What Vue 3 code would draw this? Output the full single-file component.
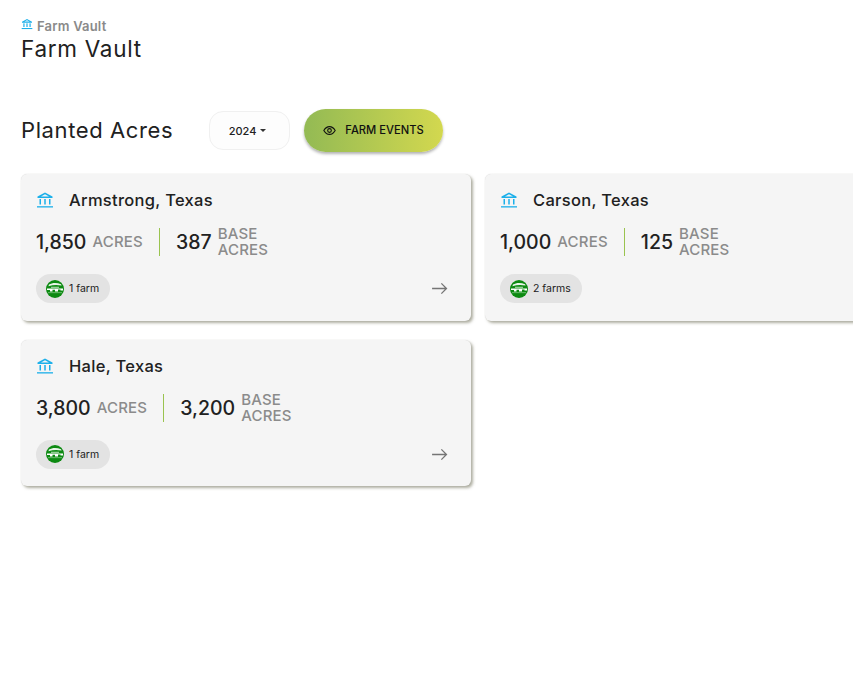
<script setup>
const counties = [
  { name: 'Armstrong, Texas', acres: '1,850', base: '387', farms: '1 farm' },
  { name: 'Carson, Texas', acres: '1,000', base: '125', farms: '2 farms' },
  { name: 'Hale, Texas', acres: '3,800', base: '3,200', farms: '1 farm' }
]
</script>

<template>
  <div class="page">
    <div class="crumb">
      <svg class="bank small" viewBox="0 0 18 18">
        <path d="M9 1.5 L16.5 5.5 V7 H1.5 V5.5 Z M9 3.2 L5 5.4 H13 Z" fill-rule="evenodd" />
        <rect x="3.5" y="8" width="1.8" height="5.5" />
        <rect x="8.1" y="8" width="1.8" height="5.5" />
        <rect x="12.7" y="8" width="1.8" height="5.5" />
        <rect x="1" y="15" width="16" height="1.6" />
      </svg>
      <span>Farm Vault</span>
    </div>
    <h1 class="title">Farm Vault</h1>

    <div class="toolbar">
      <h2 class="section">Planted Acres</h2>
      <button class="year">2024 <i class="caret"></i></button>
      <button class="events">
        <svg class="eye" viewBox="0 0 24 24" fill="none" stroke="#111" stroke-width="2">
          <path d="M1.5 12 C5 6 9 4.8 12 4.8 S19 6 22.5 12 C19 18 15 19.2 12 19.2 S5 18 1.5 12 Z" />
          <circle cx="12" cy="12" r="3.4" />
        </svg>
        FARM EVENTS
      </button>
    </div>

    <div class="grid">
      <div v-for="c in counties" :key="c.name" class="card">
        <div class="card-head">
          <svg class="bank" viewBox="0 0 18 18">
            <path d="M9 1.5 L16.5 5.5 V7 H1.5 V5.5 Z M9 3.2 L5 5.4 H13 Z" fill-rule="evenodd" />
            <rect x="3.5" y="8" width="1.5" height="5.5" />
            <rect x="8.25" y="8" width="1.5" height="5.5" />
            <rect x="13" y="8" width="1.5" height="5.5" />
            <rect x="1" y="15.2" width="16" height="1.3" />
          </svg>
          <span class="name">{{ c.name }}</span>
        </div>
        <div class="stats">
          <span class="num">{{ c.acres }}</span>
          <span class="unit">ACRES</span>
          <span class="divider"></span>
          <span class="num">{{ c.base }}</span>
          <span class="unit">BASE<br />ACRES</span>
        </div>
        <div class="card-foot">
          <span class="chip">
            <svg class="logo" viewBox="0 0 18 18">
              <circle cx="9" cy="9" r="9" fill="#0d8a12" />
              <path d="M3 4.6 C6 2.6 11 2.4 15 4.2 L15.6 5.6 C11 4.6 7 4.8 2.4 6.2 Z" fill="#e9f5e9" />
              <path d="M1 8.6 H17 V10.6 H14.5 V9.6 H12 V11.4 H9 V9.8 H6.5 V11.4 H4 V10 H1 Z" fill="#fff" />
              <path d="M5 6.8 H13 V7.7 H5 Z" fill="#cfe9cf" />
              <path d="M2 12.4 H16 V13.1 H2 Z" fill="#8fcf90" />
            </svg>
            {{ c.farms }}
          </span>
          <svg class="arrow" viewBox="0 0 18 14" fill="none" stroke="#757575" stroke-width="1.4">
            <path d="M1 7 H16.5 M11 1.5 L16.5 7 L11 12.5" />
          </svg>
        </div>
      </div>
    </div>
  </div>
</template>

<style scoped>
.page {
  height: 683px;
  overflow: hidden;
  padding: 17px 0 0 21px;
  box-sizing: border-box;
  font-family: Inter, "Liberation Sans", sans-serif;
  color: #212121;
  background: #fff;
}

.crumb {
  display: flex;
  align-items: center;
  gap: 4px;
  height: 17px;
  font-size: 13px;
  font-weight: 600;
  letter-spacing: 0.2px;
  color: #8a8a8a;
}

.bank {
  width: 18px;
  height: 18px;
  fill: #1cb0ea;
  flex: none;
}

.bank.small {
  width: 12px;
  height: 12px;
  margin-top: -3px;
}

.title {
  margin: 0;
  font-size: 22.5px;
  line-height: 30px;
  font-weight: 400;
  letter-spacing: 0.7px;
}

.toolbar {
  display: flex;
  align-items: center;
  margin-top: 44px;
  height: 44px;
}

.section {
  margin: 0;
  width: 188px;
  font-size: 22px;
  font-weight: 400;
  letter-spacing: 0.6px;
}

.year {
  width: 81px;
  height: 39px;
  margin-top: 1px;
  padding: 0 4px 0 0;
  border: 1px solid #f0f0f0;
  border-radius: 14px;
  background: #fdfdfd;
  font: 500 11px Inter, sans-serif;
  color: #212121;
  display: flex;
  align-items: center;
  justify-content: center;
  gap: 4px;
}

.caret {
  width: 0;
  height: 0;
  border: 3px solid transparent;
  border-top-color: #333;
  border-bottom: 0;
}

.events {
  width: 139px;
  height: 43px;
  margin-left: 14px;
  border: 0;
  border-radius: 22px;
  background: linear-gradient(90deg, #93ba54, #d3d84f);
  box-shadow: 0 2px 3px rgba(0, 0, 0, 0.3);
  font: 500 11.2px Inter, sans-serif;
  color: #111;
  display: flex;
  align-items: center;
  justify-content: center;
  gap: 9px;
}

.eye {
  width: 13px;
  height: 13px;
}

.grid {
  display: grid;
  grid-template-columns: 450px 450px;
  column-gap: 14px;
  row-gap: 19px;
  margin-top: 22px;
}

.card {
  height: 146.5px;
  box-sizing: border-box;
  padding: 15px 23px 0 15px;
  background: #f5f5f5;
  border-radius: 6px;
  box-shadow: 2px 2px 3px rgba(110, 110, 85, 0.55), 0 0 1px rgba(0, 0, 0, 0.18);
}

.card-head {
  display: flex;
  align-items: center;
  gap: 15px;
  height: 22px;
}

.name {
  font-size: 16.5px;
  font-weight: 500;
  letter-spacing: 0.3px;
}

.stats {
  display: flex;
  align-items: center;
  height: 28px;
  margin-top: 17px;
}

.num {
  font-size: 19.5px;
  font-weight: 500;
  margin-right: 6px;
}

.unit {
  font-size: 15px;
  line-height: 16px;
  font-weight: 500;
  letter-spacing: 0.2px;
  color: #8b8b8b;
}

.divider {
  width: 1px;
  height: 28px;
  background: #9ac34f;
  margin: 0 16px;
}

.card-foot {
  display: flex;
  align-items: center;
  justify-content: space-between;
  margin-top: 18px;
}

.chip {
  display: inline-flex;
  align-items: center;
  gap: 5px;
  height: 29px;
  padding: 0 11px 0 10px;
  border-radius: 15px;
  background: #e3e3e3;
  font-size: 10.5px;
  font-weight: 400;
}

.logo {
  width: 18px;
  height: 18px;
}

.arrow {
  width: 17px;
  height: 13px;
}
</style>
